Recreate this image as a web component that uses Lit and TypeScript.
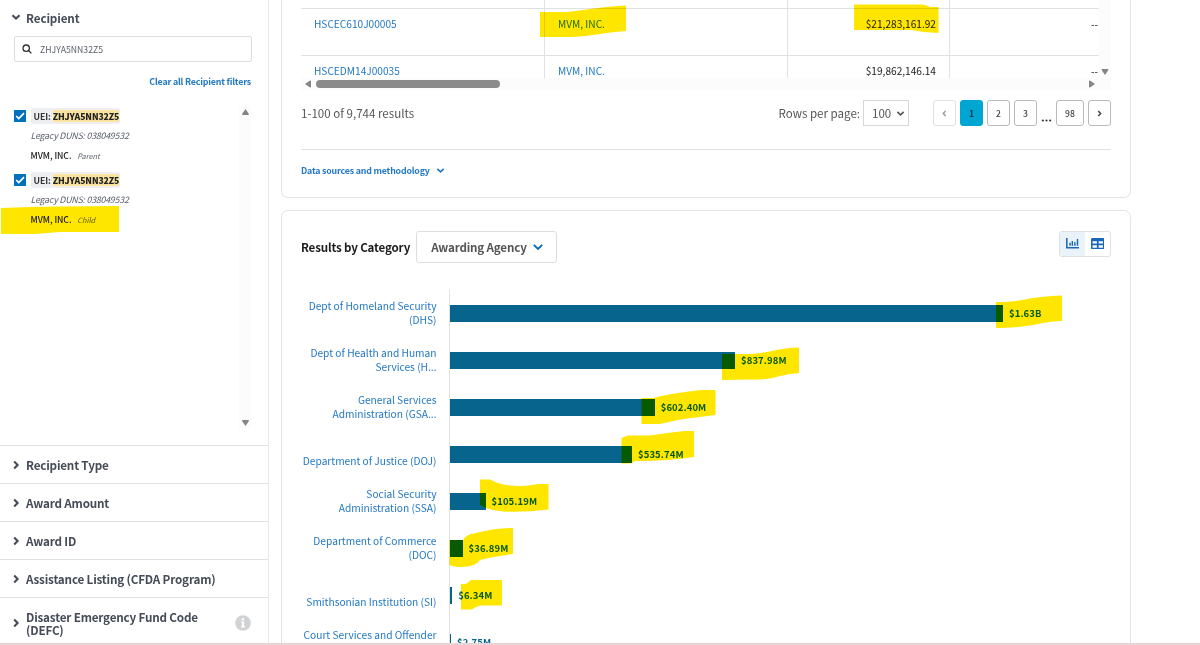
import { LitElement, html, css, svg } from "lit";
import { customElement } from "lit/decorators.js";

const chevron = (dir: "down" | "right" | "left", cls = "") => {
  const d = { down: "M1.5 3.2 5 6.6 8.5 3.2", right: "M3.2 1.5 6.6 5 3.2 8.5", left: "M6.6 1.5 3.2 5 6.6 8.5" }[dir];
  return html`<svg class="chev ${cls}" viewBox="0 0 10 10"><path d=${d} /></svg>`;
};

const triangle = (points: string) => html`<svg class="tri" viewBox="0 0 8 8"><path d=${points} /></svg>`;
const TRI_UP = "M4 1 7.4 6Q7.6 7 6.8 7H1.2Q.4 7 .6 6Z";
const TRI_DOWN = "M4 7 .6 2Q.4 1 1.2 1H6.8Q7.6 1 7.4 2Z";
const TRI_LEFT = "M1 4 6 .6Q7 .4 7 1.2V6.8Q7 7.6 6 7.4Z";
const TRI_RIGHT = "M7 4 2 .6Q1 .4 1 1.2V6.8Q1 7.6 2 7.4Z";

@customElement("filter-panel")
export class FilterPanel extends LitElement {
  static styles = css`
    :host { display: flex; flex-direction: column; width: 268px; height: 643px; flex: none; border-right: 1px solid #e6e7e8; overflow: hidden; color: #454b57; }
    * { box-sizing: border-box; }
    .chev { width: 10px; height: 10px; fill: none; stroke: #454b57; stroke-width: 2.1; flex: none; }
    .tri { width: 9px; height: 8px; fill: #858585; display: block; }
    .head { display: flex; align-items: center; gap: 5px; height: 34px; flex: none; padding-left: 11px; font-size: 11.7px; font-weight: 700; letter-spacing: -.12px; }
    .search { display: flex; align-items: center; gap: 8px; margin: 2px 0 0 14px; width: 238px; height: 26px; border: 1px solid #dcdee0; border-radius: 2px; padding-left: 7px; font-size: 8.7px; color: #5b616b; flex: none; }
    .search span { padding-top: 1px; }
    .search svg { width: 10px; height: 10px; fill: none; stroke: #333; stroke-width: 1.3; }
    .clear { margin: 12px 17px 0 0; text-align: right; height: 16px; flex: none; line-height: 16px; font-size: 8.9px; font-weight: 700; color: #2378c3; letter-spacing: -.19px; }
    .list { display: flex; justify-content: space-between; margin: 16px 17px 0 14px; height: 323px; flex: none; }
    .track { width: 12px; background: #fcfcfc; display: flex; flex-direction: column; justify-content: space-between; align-items: center; padding: 2px 0; }
    .item { display: grid; grid-template-columns: 12px 1fr; column-gap: 4.5px; height: 64px; padding-top: 2px; }
    .box { width: 12px; height: 12px; margin-top: 2px; background: #0071bc; }
    .box svg { display: block; width: 12px; height: 12px; fill: none; stroke: #fff; stroke-width: 1.7; }
    .chip { display: flex; align-items: center; width: 89.500px; height: 16px; background: #edeff0; border-radius: 2px; padding-left: 3px; font-size: 8.7px; font-weight: 700; color: #333; gap: 2px; white-space: nowrap; letter-spacing: -.1px; }
    .chip span { padding-top: 1px; }
    .chip b { background: #fae3a0; height: 12px; line-height: 13px; color: #212121; }
    .duns { font-size: 8.9px; font-style: italic; line-height: 12px; height: 12px; margin-top: 6px; color: #5b616b; letter-spacing: -.25px; }
    .name { font-size: 8.7px; font-weight: 500; line-height: 12px; margin-top: 8px; color: #212121; letter-spacing: -.05px; }
    .name i { font-size: 7.4px; font-weight: 400; margin-left: 4px; color: #5b616b; }
    .row { display: flex; align-items: center; gap: 5px; height: 38px; flex: none; border-top: 1px solid #e0e1e3; padding: 0 17px 0 11px; font-size: 11.7px; font-weight: 700; line-height: 13px; letter-spacing: -.19px; }
    .row span { flex: 1; }
    .last { height: 50px; }
    .rows { margin-top: 16px; }
    .info { width: 16px; height: 16px; }
  `;

  private item(kind: string) {
    return html`<div class="item">
      <div class="box"><svg viewBox="0 0 12 12"><path d="M2.2 6 4.8 8.6 10 3.2" /></svg></div>
      <div>
        <div class="chip"><span>UEI:</span><b>ZHJYA5NN32Z5</b></div>
        <div class="duns">Legacy DUNS: 038049532</div>
        <div class="name">MVM, INC. <i>${kind}</i></div>
      </div>
    </div>`;
  }

  render() {
    return html`
      <div class="head">${chevron("down")}<span>Recipient</span></div>
      <div class="search">
        <svg viewBox="0 0 10 10"><circle cx="4.2" cy="4.2" r="3.2" /><path d="M6.5 6.5 9.4 9.4" /></svg>
        <span>ZHJYA5NN32Z5</span>
      </div>
      <div class="clear">Clear all Recipient filters</div>
      <div class="list">
        <div>${this.item("Parent")}${this.item("Child")}</div>
        <div class="track">${triangle(TRI_UP)}${triangle(TRI_DOWN)}</div>
      </div>
      <div class="rows">
        ${["Recipient Type", "Award Amount", "Award ID", "Assistance Listing (CFDA Program)"].map(
          (t) => html`<div class="row">${chevron("right")}<span>${t}</span></div>`
        )}
        <div class="row last">
          ${chevron("right")}<span>Disaster Emergency Fund Code<br />(DEFC)</span>
          <svg class="info" viewBox="0 0 16 16"><circle cx="8" cy="8" r="7.8" fill="#d0d2d4" /><path d="M6.7 3.3h2.4v2.1H6.7zM6.1 6.6h3v4.3h1v1.6H6v-1.6h1V8.1h-.9z" fill="#fff" /></svg>
        </div>
      </div>
    `;
  }
}

@customElement("results-card")
export class ResultsCard extends LitElement {
  static styles = css`
    :host { display: block; height: 198px; box-sizing: border-box; border: 1px solid #e3e4e6; border-width: 0 1px 1px; border-bottom-width: 1.5px; border-radius: 0 0 7px 7px; padding: 0 19px; }
    * { box-sizing: border-box; }
    .viewport { display: grid; grid-template-columns: 798px 12px; grid-template-rows: 78px 12px; }
    .table { overflow: hidden; font-size: 10.15px; color: #212121; }
    .tr { display: grid; grid-template-columns: 244px 243px 162px 149px; height: 47px; }
    .tr:first-child { height: 8px; }
    .tr div { border-right: 1px solid #dfe1e2; border-bottom: 1px solid #dfe1e2; padding: 8px 13px 0; line-height: 16px; margin-bottom: -1px; }
    .tr:first-child div { padding-top: 0; }
    .tr div:nth-child(-n + 2) { color: #2378c3; }
    .tr div:nth-child(n + 3) { text-align: right; }
    .tr div:last-child { border-right: 0; padding-right: 1px; }
    .vtrack { background: #fcfcfc; display: flex; flex-direction: column; justify-content: flex-end; align-items: center; padding-bottom: 2px; }
    .htrack { background: #fcfcfc; display: flex; align-items: center; padding: 0 3px 0 3px; grid-column: 1; }
    .thumb { width: 184px; height: 8px; border-radius: 4px; background: #8b8b8b; margin: 0 auto 0 4px; }
    .corner { background: #fcfcfc; }
    .tri { width: 8px; height: 8px; fill: #858585; display: block; }
    .pager { display: flex; align-items: center; height: 46px; font-size: 11.55px; color: #555; }
    .count { flex: 1; }
    .select { display: flex; align-items: center; justify-content: space-between; width: 46px; height: 26px; border: 1px solid #d6d7d9; margin: 0 24px 0 3px; padding: 0 3px 0 8px; }
    .chev { width: 9px; height: 9px; fill: none; stroke: currentColor; stroke-width: 1.8; }
    .pages { display: flex; gap: 4px; align-items: center; font-size: 8.6px; font-weight: 500; color: #444; }
    .pg { width: 23px; height: 25.5px; border: 1px solid #b6babf; border-radius: 3px; display: flex; align-items: center; justify-content: center; }
    .off { border-color: #dfe1e2; color: #999; }
    .on { background: #00a6d2; border-color: #00a6d2; color: #112e51; font-weight: 700; }
    .wide { width: 28px; }
    .dots { width: 11px; height: 3px; display: block; margin-top: 14px; fill: #333; }
    .pg .chev { width: 7px; height: 7px; stroke-width: 2.1; }
    .sources { display: flex; align-items: center; gap: 6px; border-top: 1px solid #dfe1e2; margin-top: 13px; height: 41px; font-size: 8.8px; font-weight: 700; color: #2378c3; letter-spacing: -.18px; }
  `;

  render() {
    const rows = [
      ["", "", "", ""],
      ["HSCEC610J00005", "MVM, INC.", "$21,283,161.92", "--"],
      ["HSCEDM14J00035", "MVM, INC.", "$19,862,146.14", "--"],
    ];
    return html`
      <div class="viewport">
        <div class="table">${rows.map((r) => html`<div class="tr">${r.map((c) => html`<div>${c}</div>`)}</div>`)}</div>
        <div class="vtrack">${triangle(TRI_DOWN)}</div>
        <div class="htrack">${triangle(TRI_LEFT)}<div class="thumb"></div>${triangle(TRI_RIGHT)}</div>
        <div class="corner"></div>
      </div>
      <div class="pager">
        <span class="count">1-100 of 9,744 results</span>
        <span>Rows per page:</span>
        <span class="select"><span>100</span>${chevron("down")}</span>
        <div class="pages">
          <span class="pg off">${chevron("left")}</span>
          <span class="pg on">1</span><span class="pg">2</span><span class="pg">3</span>
          <svg class="dots" viewBox="0 0 12 3"><circle cx="2" cy="1.5" r="1.2" /><circle cx="6" cy="1.5" r="1.2" /><circle cx="10" cy="1.5" r="1.2" /></svg>
          <span class="pg wide">98</span><span class="pg">${chevron("right")}</span>
        </div>
      </div>
      <div class="sources"><span>Data sources and methodology</span>${chevron("down")}</div>
    `;
  }
}

interface Bar { lines: string[]; width: number; value: string; }

const BARS: Bar[] = [
  { lines: ["Dept of Homeland Security", "(DHS)"], width: 553, value: "$1.63B" },
  { lines: ["Dept of Health and Human", "Services (H..."], width: 285, value: "$837.98M" },
  { lines: ["General Services", "Administration (GSA..."], width: 204.7, value: "$602.40M" },
  { lines: ["Department of Justice (DOJ)"], width: 182, value: "$535.74M" },
  { lines: ["Social Security", "Administration (SSA)"], width: 35.5, value: "$105.19M" },
  { lines: ["Department of Commerce", "(DOC)"], width: 12.5, value: "$36.89M" },
  { lines: ["Smithsonian Institution (SI)"], width: 2.2, value: "$6.34M" },
  { lines: ["Court Services and Offender", "\u00a0"], width: 1, value: "$2.75M" },
];

@customElement("category-card")
export class CategoryCard extends LitElement {
  static styles = css`
    :host { display: block; height: 460px; box-sizing: border-box; border: 1px solid #e3e4e6; border-radius: 7px; padding: 20px 19px 0; }
    * { box-sizing: border-box; }
    .head { display: flex; align-items: center; height: 32px; font-weight: 700; font-size: 11.6px; color: #1b1b1b; letter-spacing: -.17px; }
    .head > span:first-child { margin-top: -1px; }
    .drop { display: flex; align-items: center; justify-content: space-between; width: 141px; height: 32px; border: 1.5px solid #dcdee0; border-radius: 3px; margin: 0 auto 0 6px; padding: 0 12px 0 14px; color: #555; }
    .drop span { margin-top: -1px; }
    .chev { width: 12px; height: 12px; fill: none; stroke: #0b6ab8; stroke-width: 1.6; }
    .toggle { display: flex; width: 52px; height: 26px; border: 1px solid #dfe1e2; border-radius: 3px; margin-top: -7px; }
    .toggle span { flex: 1; display: flex; align-items: center; justify-content: center; }
    .toggle span:first-child { background: #ebf3fa; }
    .toggle svg { width: 13.500px; height: 11.500px; fill: #1668b8; }
    .chart { margin-top: 27px; }
    .row { display: grid; grid-template-columns: 135.5px 1fr; column-gap: 12.5px; height: 47px; }
    .label { display: flex; flex-direction: column; justify-content: flex-end; height: 37px; text-align: right; font-size: 10.2px; line-height: 14px; color: #2378c3; white-space: nowrap; }
    .plot { display: flex; align-items: center; gap: 6px; border-left: 1px solid #dfe1e2; font-size: 9.5px; font-weight: 700; color: #07648d; letter-spacing: .1px; }
    .plot span { margin-top: -2px; }
    .bar { height: 17px; background: #07648d; flex: none; }
  `;

  render() {
    return html`
      <div class="head">
        <span>Results by Category</span>
        <span class="drop"><span>Awarding Agency</span>${chevron("down")}</span>
        <div class="toggle">
          <span><svg viewBox="0 0 14 12"><path d="M0 0h1.6v9.4H14V11H0zM3.4 5h1.5v3H3.4zM5.8 3.2h1.5V8H5.8zM8.5 4.5H10V8H8.5zM11.2 1h1.5v7h-1.5z" /></svg></span>
          <span><svg viewBox="0 0 14 12"><path fill-rule="evenodd" d="M1.5 0h11Q14 0 14 1.5v9Q14 12 12.5 12h-11Q0 12 0 10.500v-9Q0 0 1.500 0zM1.600 3.300v2.500h4.500V3.300zM7.900 3.300v2.500h4.500V3.300zM1.600 7.500v2.700h4.500V7.500zM7.900 7.500v2.700h4.500V7.500z" /></svg></span>
        </div>
      </div>
      <div class="chart">
        ${BARS.map(
          (b) => html`<div class="row">
            <div class="label">${b.lines.map((l) => html`<span>${l}</span>`)}</div>
            <div class="plot"><div class="bar" style="width:${b.width}px"></div><span>${b.value}</span></div>
          </div>`
        )}
      </div>
    `;
  }
}

const STROKES = [
  "M1 208 30 207 60 206.500 119 206V232L60 232 35 234H1Z",
  "M540 12H568L590 9Q610 6 626 5.500V31Q612 32 600 34 585 36.500 572 37H540Z",
  "M854 4.500H922Q927 5 930 7H938.500V33Q925 33 912 30H854Z",
  "M996 302Q1012 302 1022 300 1040 296 1062 295.500V321Q1050 321 1036 324.500 1018 328 996 328Z",
  "M722 354H750Q762 353 772 351 786 347.500 799 347.500V373Q788 373.500 778 376.500 768 380 750 379.500L722 380Z",
  "M641.500 398H654Q660 396 672 394 698 390 704 390H715.500V415L680 419.500 660 424H641.500Z",
  "M621.500 438 628 435.500H650Q672 432 685 431H694V457Q670 461 635 461L631 463.500H621.500Z",
  "M480 479.500H490Q500 485 512 485.500 523 487 538 484H548.500V509.500Q525 512.500 503 511.500 490 511 480 505Z",
  "M449.500 540H463Q467 534 474 533.500 495 528 513 528V554Q490 557 480 560 476 566.500 462 567 454 567 449.500 565Z",
  "M461 584H466L471 580H502V605.500H482Q476 606 472 609.500H461Z",
];

@customElement("app-root")
export class AppRoot extends LitElement {
  static styles = css`
    :host { display: block; position: relative; width: 1200px; height: 645px; overflow: hidden; background: #fff; font-family: "Noto Sans CJK JP", "Noto Sans CJK SC", sans-serif; }
    .page { display: flex; height: 643px; overflow: hidden; }
    main { display: flex; flex-direction: column; gap: 12px; width: 850px; margin-left: 12px; }
    results-card, category-card { flex: none; }
    .edge { height: 2px; background: #e9d5d3; }
    .marker { position: absolute; inset: 0; width: 1200px; height: 645px; mix-blend-mode: multiply; fill: #ffe600; }
  `;

  render() {
    return html`
      <div class="page">
        <filter-panel></filter-panel>
        <main><results-card></results-card><category-card></category-card></main>
      </div>
      <div class="edge"></div>
      <svg class="marker" viewBox="0 0 1200 645">${STROKES.map((d) => svg`<path d=${d} />`)}</svg>
    `;
  }
}
